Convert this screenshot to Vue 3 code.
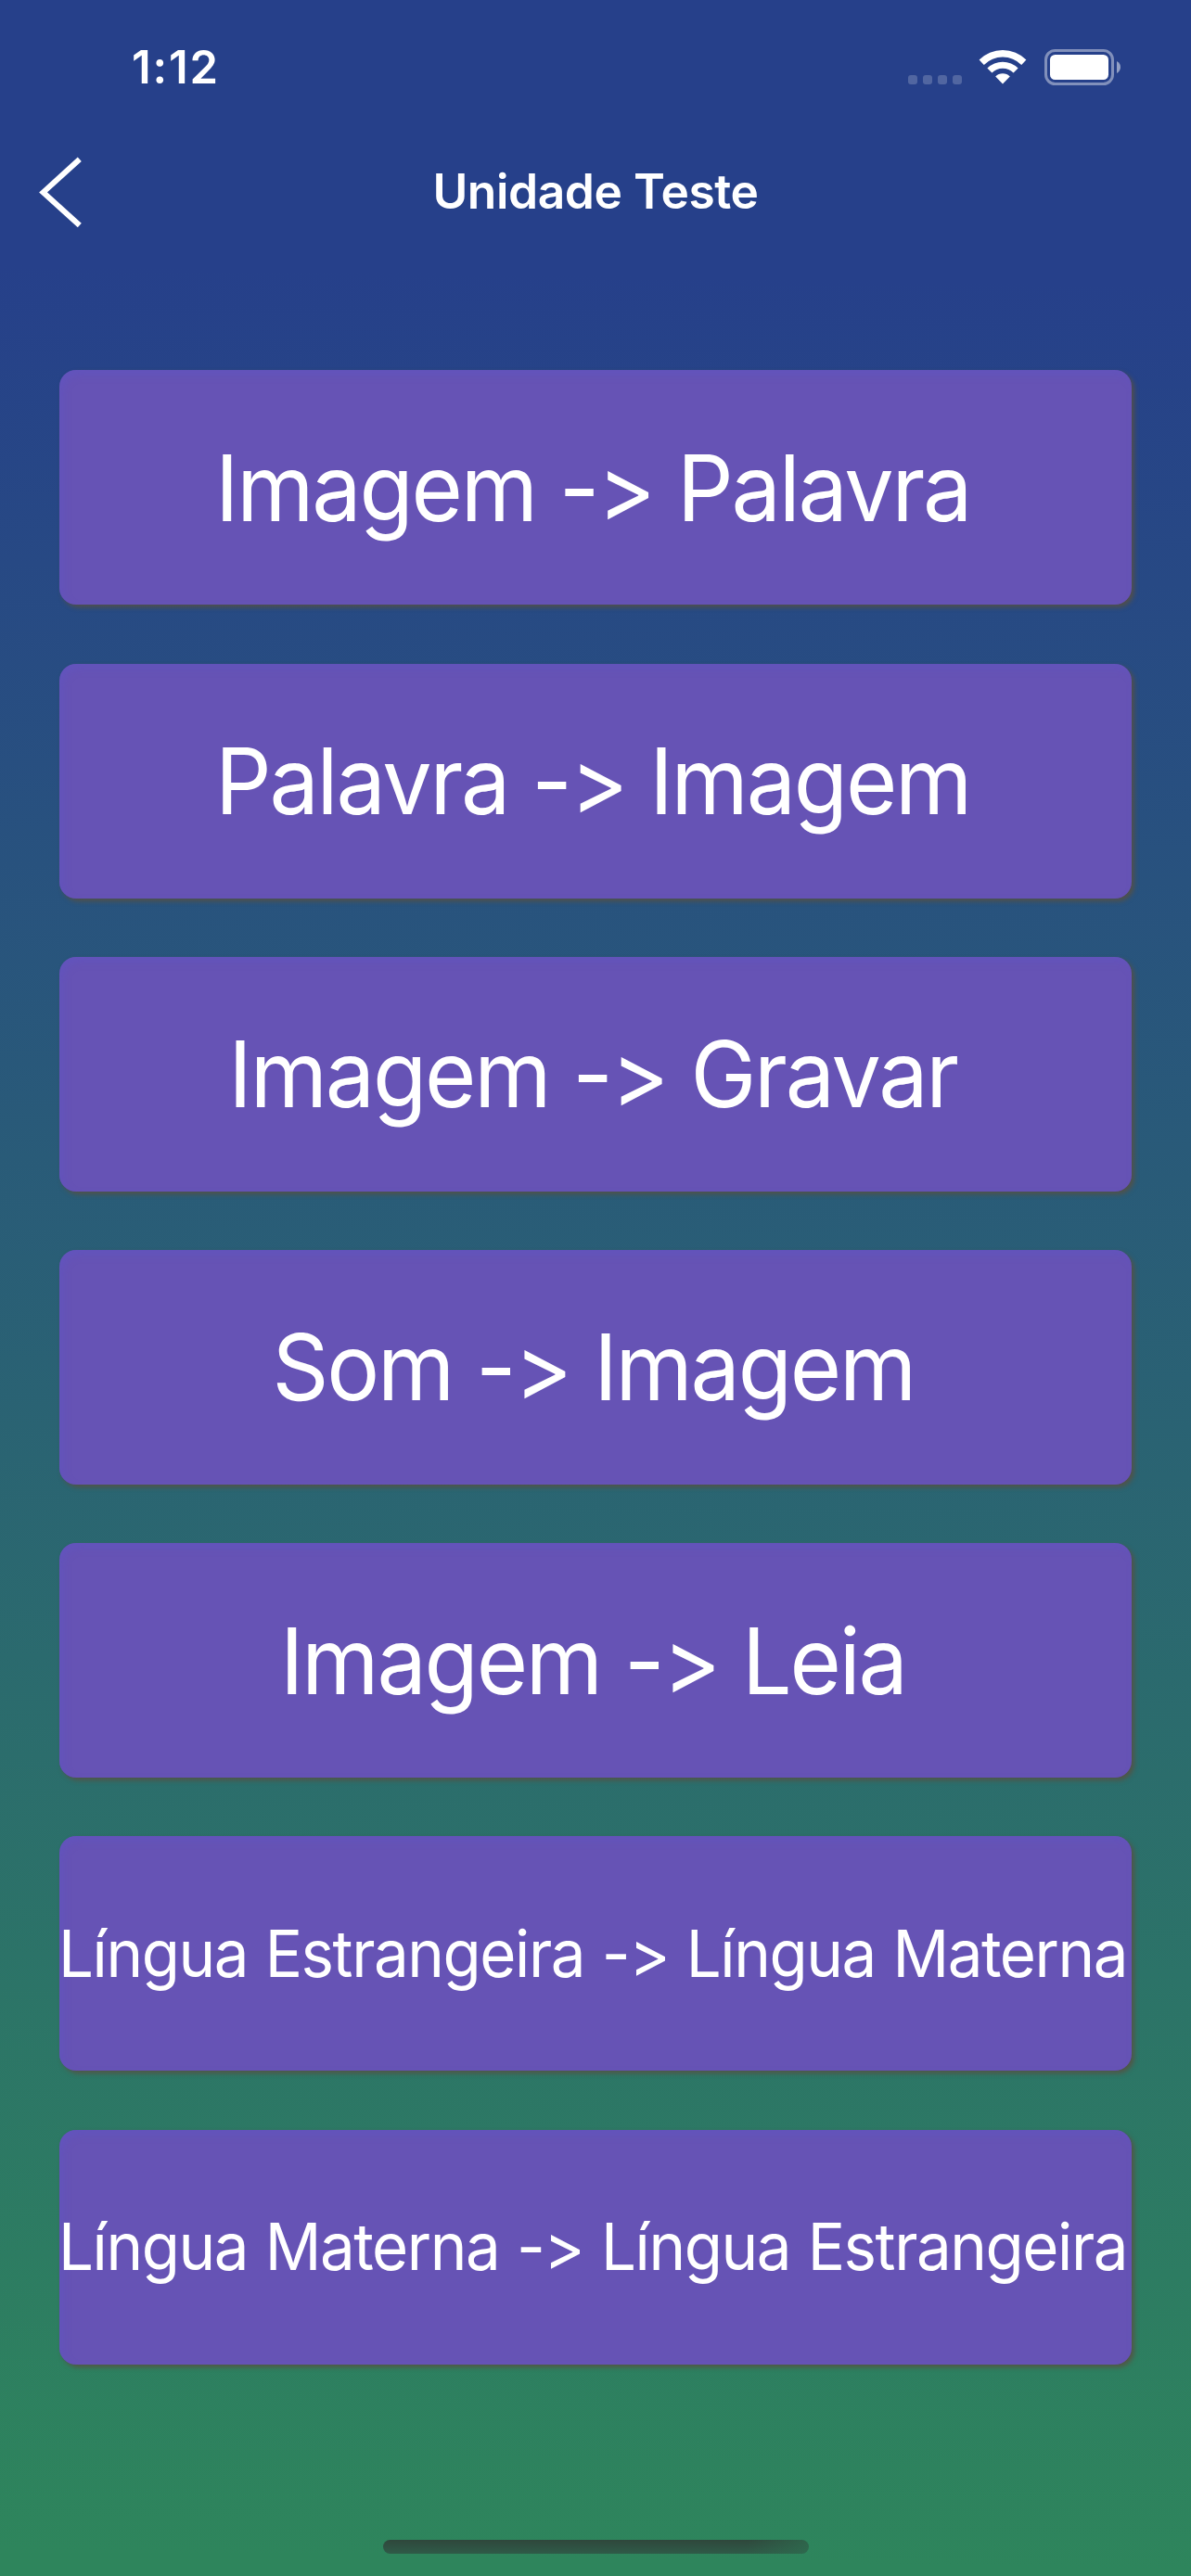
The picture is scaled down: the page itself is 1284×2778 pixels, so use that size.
<template>
  <div class="screen">
    <div class="status-bar">
      <span class="time">1:12</span>
      <div class="status-icons">
        <svg class="cell" width="58" height="10" viewBox="0 0 58 10">
          <rect v-for="n in 4" :key="n" :x="(n - 1) * 16" y="0" width="10" height="10" rx="3" />
        </svg>
        <svg class="wifi" width="52" height="38" viewBox="0 0 52 38">
          <path d="M0.6 11.5 A36 36 0 0 1 51.4 11.5 L46.2 16.9 A28.6 28.6 0 0 0 5.8 16.9 Z" />
          <path d="M9.4 20.5 A23.6 23.6 0 0 1 42.6 20.5 L37.6 25.6 A16.4 16.4 0 0 0 14.4 25.6 Z" />
          <path d="M18.2 29.4 A11.2 11.2 0 0 1 33.8 29.4 L26 37.5 Z" />
        </svg>
        <svg class="battery" width="83" height="40" viewBox="0 0 83 40">
          <rect x="1.5" y="1.5" width="72" height="36" rx="10" class="shell" />
          <rect x="6" y="6" width="63" height="27" rx="5.5" class="level" />
          <path d="M78 13 C80.7 14.4 82 16.6 82 19.3 C82 22 80.7 24.5 78 26 Z" class="cap" />
        </svg>
      </div>
    </div>

    <header class="nav-bar">
      <button class="back" aria-label="Voltar">
        <svg width="47" height="76" viewBox="0 0 47 76">
          <polyline points="43.8,2.7 4.6,38.4 43.8,74" />
        </svg>
      </button>
      <h1 class="title">Unidade Teste</h1>
    </header>

    <main class="exercises">
      <button
        v-for="item in exercises"
        :key="item.label"
        class="exercise"
        :class="{ long: item.long }"
      >
        <span class="label">{{ item.label }}</span>
      </button>
    </main>

    <div class="home-indicator"></div>
  </div>
</template>

<script setup>
const exercises = [
  { label: 'Imagem -> Palavra' },
  { label: 'Palavra -> Imagem' },
  { label: 'Imagem -> Gravar' },
  { label: 'Som -> Imagem' },
  { label: 'Imagem -> Leia' },
  { label: 'Língua Estrangeira -> Língua Materna', long: true },
  { label: 'Língua Materna -> Língua Estrangeira', long: true }
]
</script>

<style>
body {
  margin: 0;
}
</style>

<style scoped>
.screen {
  display: flex;
  flex-direction: column;
  box-sizing: border-box;
  width: 1284px;
  height: 2778px;
  overflow: hidden;
  color: white;
  font-family: Inter, "Liberation Sans", sans-serif;
  font-feature-settings: "calt" 0;
  background: linear-gradient(181deg, #26408a 11%, #2e855c 99%);
}

.status-bar {
  display: flex;
  justify-content: space-between;
  box-sizing: border-box;
  height: 141px;
  padding: 43px 75px 0 142px;
}

.time {
  font-size: 49px;
  font-weight: 600;
  line-height: 60px;
  letter-spacing: 1.8px;
}

.status-icons {
  display: flex;
  align-items: flex-start;
  padding-top: 10px;
}

.cell {
  margin: 28px 18px 0 0;
  fill: rgba(255, 255, 255, 0.2);
}

.wifi {
  margin-right: 19px;
  fill: white;
}

.shell {
  fill: none;
  stroke: rgba(255, 255, 255, 0.42);
  stroke-width: 3;
}

.level {
  fill: white;
}

.cap {
  fill: rgba(255, 255, 255, 0.5);
}

.nav-bar {
  display: grid;
  grid-template-columns: 200px 1fr 200px;
  align-items: center;
  height: 132px;
}

button {
  padding: 0;
  border: none;
  background: none;
  color: inherit;
  font: inherit;
}

.back {
  display: flex;
  padding-left: 42px;
}

.back polyline {
  fill: none;
  stroke: white;
  stroke-width: 6;
}

.title {
  margin: 0;
  padding-bottom: 2px;
  font-size: 51.5px;
  font-weight: 600;
  line-height: 64px;
  letter-spacing: -0.45px;
  text-align: center;
}

.exercises {
  display: flex;
  flex-direction: column;
  gap: 63.2px;
  padding: 126.4px 64px 0;
}

.exercise {
  display: flex;
  align-items: center;
  justify-content: center;
  height: 253px;
  padding-right: 5px;
  border-radius: 18px;
  background: #6653b5;
  box-shadow: 3px 3px 5px rgba(88, 80, 66, 0.85), inset 4px 5px 8px rgba(92, 84, 200, 0.4);
  font-feature-settings: "calt" 0;
}

.label {
  font-size: 99px;
  line-height: 120px;
  letter-spacing: -2.3px;
  word-spacing: 0.5px;
  white-space: nowrap;
  transform: scaleX(0.96);
}

.long .label {
  font-size: 70px;
  letter-spacing: -1.5px;
  word-spacing: 1.2px;
}

.home-indicator {
  width: 459px;
  height: 15px;
  margin: 189px 0 0 413px;
  border-radius: 8px;
  background: linear-gradient(100deg, rgba(47, 64, 56, 0) 85%, rgba(46, 110, 80, 0.75) 100%), linear-gradient(#2f473c, #2f5b48);
}
</style>
